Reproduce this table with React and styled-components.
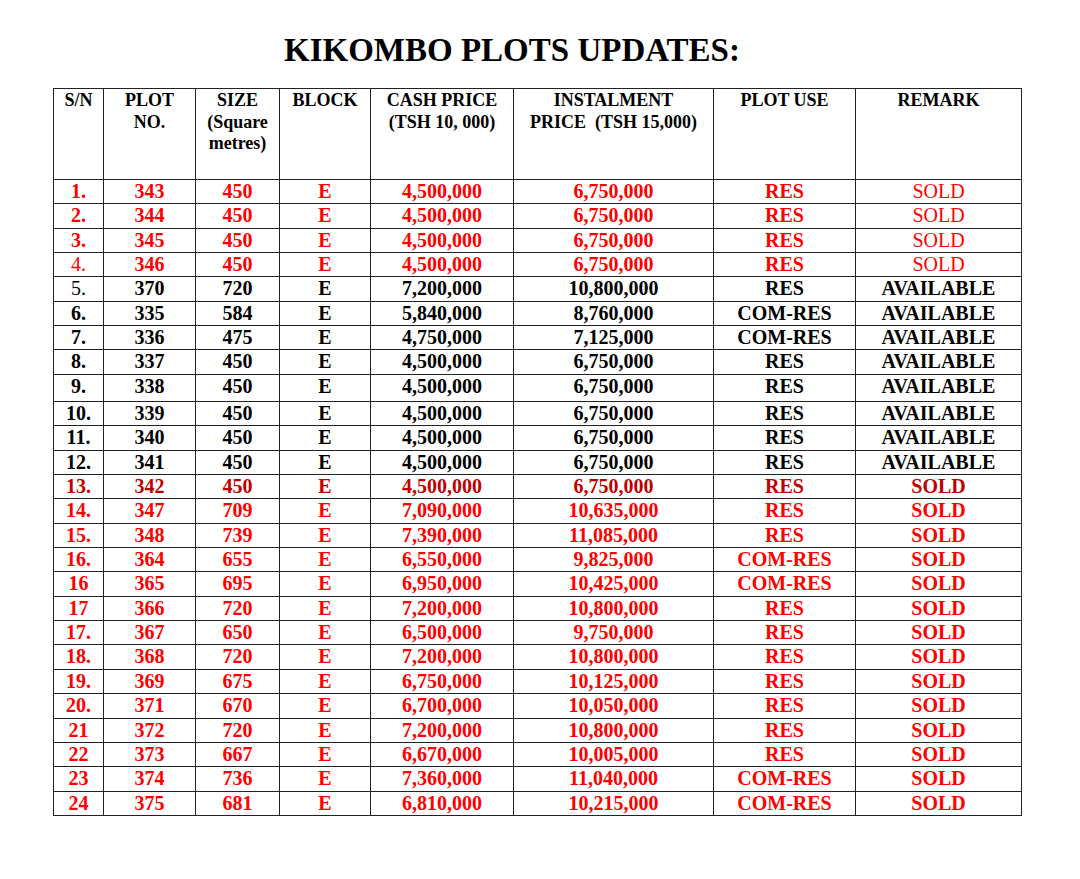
import React from 'react';
import styled, { createGlobalStyle } from 'styled-components';

const GlobalStyle = createGlobalStyle`
  html, body {
    margin: 0;
    padding: 0;
    background: #ffffff;
  }
  body {
    font-family: "Liberation Serif", "Times New Roman", serif;
    color: #000;
  }
`;

const Page = styled.div`
  width: 1080px;
  padding-top: 31px;
`;

const Title = styled.h1`
  margin: 0;
  width: 1024px;
  text-align: center;
  font-size: 33px;
  line-height: 38px;
  font-weight: 700;
`;

const Table = styled.table`
  margin: 19px 0 0 53px;
  border-collapse: collapse;
  table-layout: fixed;
  width: 968px;
`;

const HeadRow = styled.tr`
  height: 91px;
`;

const HeadCell = styled.th`
  border: 1px solid #222;
  padding: 1px 0 0;
  vertical-align: top;
  text-align: center;
  font-size: 18px;
  line-height: 21.5px;
  font-weight: 700;
`;

const Row = styled.tr`
  height: ${p => (p.$tall ? '27.3px' : '24.35px')};
`;

const Cell = styled.td`
  border: 1px solid #222;
  padding: 1px 0 0;
  vertical-align: top;
  text-align: center;
  font-size: 20px;
  line-height: 21px;
  white-space: nowrap;
  color: ${p => p.$color};
  font-weight: ${p => (p.$light ? 400 : 700)};
`;

const RED = '#ff0000';
const DARK = '#c00000';
const BLACK = '#000000';

const widths = [50, 92, 84, 91, 143, 200, 142, 166];

const heads = [
  ['S/N'],
  ['PLOT', 'NO.'],
  ['SIZE', '(Square', 'metres)'],
  ['BLOCK'],
  ['CASH PRICE', '(TSH 10, 000)'],
  ['INSTALMENT', 'PRICE\u00a0\u00a0(TSH 15,000)'],
  ['PLOT USE'],
  ['REMARK'],
];

// sn, plot, size, cash, instalment, use, remark, colour, options
const rows = [
  ['1.', '343', '450', '4,500,000', '6,750,000', 'RES', 'SOLD', RED, { lightRemark: true }],
  ['2.', '344', '450', '4,500,000', '6,750,000', 'RES', 'SOLD', RED, { lightRemark: true }],
  ['3.', '345', '450', '4,500,000', '6,750,000', 'RES', 'SOLD', RED, { lightRemark: true }],
  ['4.', '346', '450', '4,500,000', '6,750,000', 'RES', 'SOLD', RED, { lightRemark: true, lightSn: true }],
  ['5.', '370', '720', '7,200,000', '10,800,000', 'RES', 'AVAILABLE', BLACK, { lightSn: true }],
  ['6.', '335', '584', '5,840,000', '8,760,000', 'COM-RES', 'AVAILABLE', BLACK],
  ['7.', '336', '475', '4,750,000', '7,125,000', 'COM-RES', 'AVAILABLE', BLACK],
  ['8.', '337', '450', '4,500,000', '6,750,000', 'RES', 'AVAILABLE', BLACK],
  ['9.', '338', '450', '4,500,000', '6,750,000', 'RES', 'AVAILABLE', BLACK, { tall: true }],
  ['10.', '339', '450', '4,500,000', '6,750,000', 'RES', 'AVAILABLE', BLACK],
  ['11.', '340', '450', '4,500,000', '6,750,000', 'RES', 'AVAILABLE', BLACK],
  ['12.', '341', '450', '4,500,000', '6,750,000', 'RES', 'AVAILABLE', BLACK],
  ['13.', '342', '450', '4,500,000', '6,750,000', 'RES', 'SOLD', DARK],
  ['14.', '347', '709', '7,090,000', '10,635,000', 'RES', 'SOLD', RED],
  ['15.', '348', '739', '7,390,000', '11,085,000', 'RES', 'SOLD', RED],
  ['16.', '364', '655', '6,550,000', '9,825,000', 'COM-RES', 'SOLD', RED],
  ['16', '365', '695', '6,950,000', '10,425,000', 'COM-RES', 'SOLD', RED],
  ['17', '366', '720', '7,200,000', '10,800,000', 'RES', 'SOLD', RED],
  ['17.', '367', '650', '6,500,000', '9,750,000', 'RES', 'SOLD', RED],
  ['18.', '368', '720', '7,200,000', '10,800,000', 'RES', 'SOLD', RED],
  ['19.', '369', '675', '6,750,000', '10,125,000', 'RES', 'SOLD', RED],
  ['20.', '371', '670', '6,700,000', '10,050,000', 'RES', 'SOLD', RED],
  ['21', '372', '720', '7,200,000', '10,800,000', 'RES', 'SOLD', RED],
  ['22', '373', '667', '6,670,000', '10,005,000', 'RES', 'SOLD', RED],
  ['23', '374', '736', '7,360,000', '11,040,000', 'COM-RES', 'SOLD', RED],
  ['24', '375', '681', '6,810,000', '10,215,000', 'COM-RES', 'SOLD', RED],
];

export default function App() {
  return (
    <Page>
      <GlobalStyle />
      <Title>KIKOMBO PLOTS UPDATES:</Title>
      <Table>
        <colgroup>
          {widths.map((w, i) => <col key={i} style={{ width: w }} />)}
        </colgroup>
        <thead>
          <HeadRow>
            {heads.map((lines, i) => (
              <HeadCell key={i}>
                {lines.map((line, j) => (
                  <React.Fragment key={j}>
                    {j > 0 && <br />}
                    {line}
                  </React.Fragment>
                ))}
              </HeadCell>
            ))}
          </HeadRow>
        </thead>
        <tbody>
          {rows.map(([sn, plot, size, cash, inst, use, remark, color, opts = {}], i) => (
            <Row key={i} $tall={opts.tall}>
              <Cell $color={color} $light={opts.lightSn}>{sn}</Cell>
              <Cell $color={color}>{plot}</Cell>
              <Cell $color={color}>{size}</Cell>
              <Cell $color={color}>E</Cell>
              <Cell $color={color}>{cash}</Cell>
              <Cell $color={color}>{inst}</Cell>
              <Cell $color={color}>{use}</Cell>
              <Cell $color={color} $light={opts.lightRemark}>{remark}</Cell>
            </Row>
          ))}
        </tbody>
      </Table>
    </Page>
  );
}
